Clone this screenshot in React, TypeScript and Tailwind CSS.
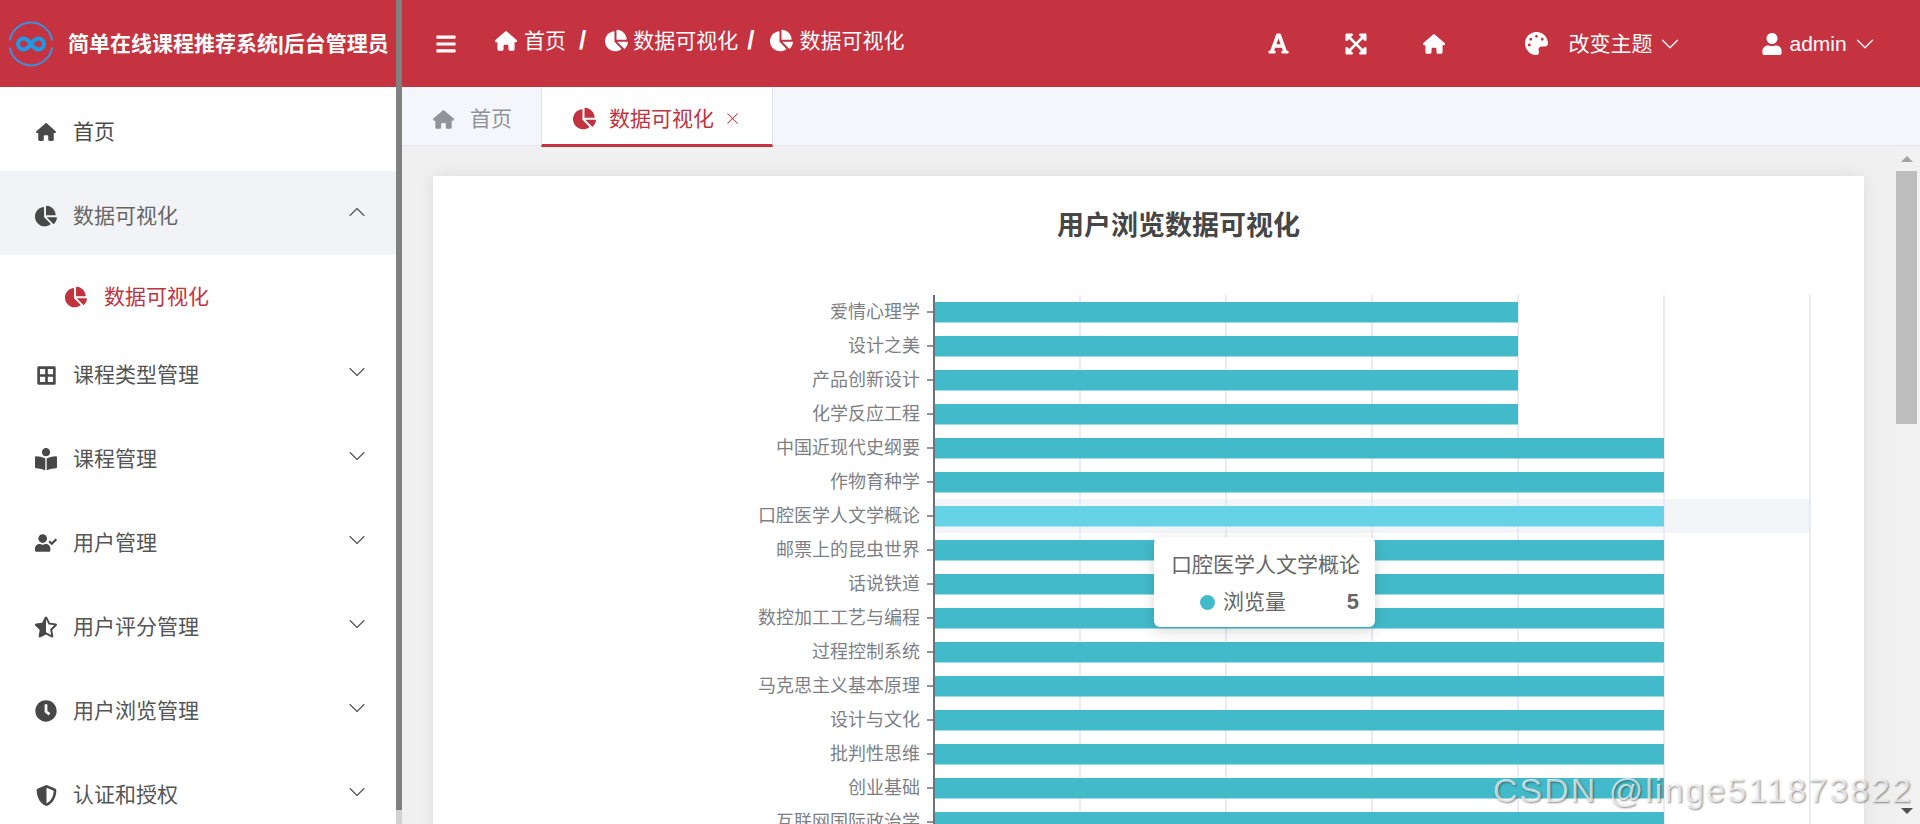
import { ChevronDown, ChevronUp, X } from "lucide-react"
import {
  FaBars,
  FaBookReader,
  FaBorderAll,
  FaChartPie,
  FaClock,
  FaExpandArrowsAlt,
  FaFont,
  FaPalette,
  FaShieldAlt,
  FaStarHalfAlt,
  FaUser,
  FaUserCheck,
} from "react-icons/fa"
import { FaHouse } from "react-icons/fa6"

const menus = [
  { name: "课程类型管理", icon: <FaBorderAll size={21} /> },
  { name: "课程管理", icon: <FaBookReader size={22} /> },
  { name: "用户管理", icon: <FaUserCheck size={22} /> },
  { name: "用户评分管理", icon: <FaStarHalfAlt size={22} /> },
  { name: "用户浏览管理", icon: <FaClock size={22} /> },
  { name: "认证和授权", icon: <FaShieldAlt size={21} /> },
]

const rows = [
  { name: "爱情心理学", value: 4 },
  { name: "设计之美", value: 4 },
  { name: "产品创新设计", value: 4 },
  { name: "化学反应工程", value: 4 },
  { name: "中国近现代史纲要", value: 5 },
  { name: "作物育种学", value: 5 },
  { name: "口腔医学人文学概论", value: 5 },
  { name: "邮票上的昆虫世界", value: 5 },
  { name: "话说铁道", value: 5 },
  { name: "数控加工工艺与编程", value: 5 },
  { name: "过程控制系统", value: 5 },
  { name: "马克思主义基本原理", value: 5 },
  { name: "设计与文化", value: 5 },
  { name: "批判性思维", value: 5 },
  { name: "创业基础", value: 5 },
  { name: "互联网国际政治学", value: 5 },
]

function Logo() {
  return (
    <svg width="46" height="46" viewBox="0 0 46 46" fill="none" className="shrink-0">
      <path d="M1.8 19.5A21.5 21.5 0 0 1 44.2 19.5" stroke="#3f8fdc" strokeWidth="2" />
      <path d="M44.2 26.5A21.5 21.5 0 0 1 1.8 26.5" stroke="#3f8fdc" strokeWidth="2" />
      <path
        d="M23 23C20.5 19.5 18 17.5 15.5 17.5A5.5 5.5 0 0 0 15.5 28.5C18 28.5 20.5 26.5 23 23C25.5 19.5 28 17.5 30.5 17.5A5.5 5.5 0 0 1 30.5 28.5C28 28.5 25.5 26.5 23 23Z"
        stroke="#1e9be6"
        strokeWidth="4"
      />
    </svg>
  )
}

function Sidebar() {
  return (
    <aside className="flex w-[402px] shrink-0">
      <div className="w-[396px]">
        <div className="flex h-[87px] items-center bg-[#c63340] pl-[8px]">
          <Logo />
          <span className="ml-[14px] text-[21px] font-bold whitespace-nowrap text-white">简单在线课程推荐系统|后台管理员</span>
        </div>
        <div className="flex h-[84px] items-center pt-[6px] pl-[34px] text-[21px] text-[#4a4a4a]">
          <span className="flex w-[24px] justify-center"><FaHouse size={20} /></span>
          <span className="ml-[15px]">首页</span>
        </div>
        <div className="flex h-[84px] items-center bg-[#f1f3f6] pt-[6px] pr-[25px] pl-[34px] text-[21px] text-[#666666]">
          <span className="flex w-[24px] justify-center text-[#484848]"><FaChartPie size={22} /></span>
          <span className="ml-[15px]">数据可视化</span>
          <ChevronUp size={28} strokeWidth={1} className="mb-[8px] ml-auto text-[#555555]" />
        </div>
        <div className="flex h-[78px] items-center pt-[6px] pl-[64px] text-[21px] text-[#c0333f]">
          <span className="flex w-[24px] justify-center"><FaChartPie size={22} /></span>
          <span className="ml-[16px]">数据可视化</span>
        </div>
        {menus.map((m) => (
          <div key={m.name} className="flex h-[84px] items-center pr-[25px] pl-[34px] text-[21px] text-[#555555]">
            <span className="flex w-[24px] justify-center text-[#484848]">{m.icon}</span>
            <span className="ml-[15px]">{m.name}</span>
            <ChevronDown size={28} strokeWidth={1} className="mb-[6px] ml-auto text-[#555555]" />
          </div>
        ))}
      </div>
      <div className="h-full w-[6px] bg-[#d2d2d2]">
        <div className="h-[810px] w-full bg-[#808080]" />
      </div>
    </aside>
  )
}

function Header() {
  return (
    <header className="flex h-[87px] items-center bg-[#c63340] text-white">
      <FaBars size={22} className="ml-[33px]" />
      <div className="mb-[6px] flex items-center">
        <FaHouse size={22} className="ml-[38px]" />
        <span className="ml-[7px] text-[21px]">首页</span>
        <span className="ml-[13px] text-[26px] font-bold">/</span>
        <FaChartPie size={23} className="ml-[19px]" />
        <span className="ml-[5px] text-[21px]">数据可视化</span>
        <span className="ml-[9px] text-[26px] font-bold">/</span>
        <FaChartPie size={23} className="ml-[16px]" />
        <span className="ml-[6px] text-[21px]">数据可视化</span>
      </div>
      <FaFont size={23} className="ml-[363px]" />
      <FaExpandArrowsAlt size={24} className="ml-[54px]" />
      <FaHouse size={22} className="ml-[55px]" />
      <FaPalette size={23} className="ml-[80px]" />
      <span className="ml-[20px] text-[21px]">改变主题</span>
      <ChevronDown size={30} strokeWidth={1} className="ml-[3px]" />
      <FaUser size={22} className="ml-[76px]" />
      <span className="ml-[6px] text-[21px]">admin</span>
      <ChevronDown size={30} strokeWidth={1} className="ml-[3px]" />
    </header>
  )
}

function Tabs() {
  return (
    <div className="flex h-[59px] items-stretch border-b border-[#e4e6ea] bg-[#f4f6fb]">
      <div className="flex w-[139px] items-center pt-[6px] pl-[31px] text-[21px] text-[#909399]">
        <FaHouse size={21} />
        <span className="ml-[16px]">首页</span>
      </div>
      <div className="relative z-10 flex h-[60px] w-[232px] items-center border-x border-b-[3px] border-x-[#dfe2e8] border-b-[#c63340] bg-white pt-[6px] pl-[31px] text-[21px] text-[#c0333f]">
        <FaChartPie size={23} />
        <span className="ml-[13px]">数据可视化</span>
        <X size={19} strokeWidth={1.3} className="ml-[9px]" />
      </div>
    </div>
  )
}

function Chart() {
  const x0 = 934
  const unit = 146
  return (
    <svg width="1431" height="560" viewBox="433 274 1431 560" className="block">
      <rect x={x0} y={295 + 6 * 34} width={876} height={34} fill="#f4f5f9" />
      {[1, 2, 3, 4, 5, 6].map((i) => (
        <line key={i} x1={x0 + i * unit} y1="295" x2={x0 + i * unit} y2="834" stroke="#e2e6f0" strokeWidth="1.5" />
      ))}
      {rows.map((r, i) => {
        const cy = 295 + i * 34 + 17
        return (
          <g key={r.name}>
            <rect x={x0} y={cy - 10} width={r.value * unit} height={20.5} fill={i === 6 ? "#66d2e5" : "#43bac9"} />
            <line x1="927" y1={cy} x2={x0} y2={cy} stroke="#6e7079" strokeWidth="1.5" />
            <text x="920" y={cy + 6} textAnchor="end" fontSize="18" fill="#7d7f86">
              {r.name}
            </text>
          </g>
        )
      })}
      <line x1={x0} y1="295" x2={x0} y2="834" stroke="#6e7079" strokeWidth="2" />
    </svg>
  )
}

function Tooltip() {
  return (
    <div className="absolute top-[361px] left-[721px] h-[90px] w-[221px] rounded-[6px] bg-white pt-[13px] pr-[16px] pl-[17px] shadow-[0_4px_14px_rgba(0,0,0,0.16)]">
      <div className="text-[21px] leading-[30px] whitespace-nowrap text-[#666666]">口腔医学人文学概论</div>
      <div className="mt-[7px] flex items-center text-[21px] leading-[30px] text-[#666666]">
        <span className="ml-[29px] h-[15px] w-[15px] rounded-full bg-[#43bac9]" />
        <span className="ml-[8px]">浏览量</span>
        <span className="ml-auto text-[22px] font-bold">5</span>
      </div>
    </div>
  )
}

function Scrollbar() {
  return (
    <div className="flex w-[24px] shrink-0 flex-col bg-[#f1f1f1]">
      <div className="flex h-[25px] w-[21px] items-end justify-center pb-[9px]">
        <svg width="12" height="6" viewBox="0 0 12 6"><path d="M6 0L12 6H0Z" fill="#a3a3a3" /></svg>
      </div>
      <div className="h-[253px] w-[21px] bg-[#bdbdbd]" />
      <div className="mt-auto mb-[10px] flex w-[21px] justify-center">
        <svg width="12" height="6" viewBox="0 0 12 6"><path d="M0 0H12L6 6Z" fill="#505050" /></svg>
      </div>
    </div>
  )
}

export default function App() {
  return (
    <div
      className="relative flex h-[824px] w-[1920px] overflow-hidden bg-white"
      style={{ fontFamily: '"Liberation Sans", "Noto Sans CJK SC", sans-serif' }}
    >
      <Sidebar />
      <div className="flex min-w-0 flex-1 flex-col">
        <Header />
        <Tabs />
        <div className="flex min-h-0 flex-1">
          <main className="min-w-0 flex-1 overflow-hidden bg-[#f0f0f0] pt-[30px] pr-[32px] pl-[31px]">
            <div className="relative h-[700px] bg-white shadow-[0_0_16px_rgba(0,0,0,0.09)]">
              <h2 className="flex h-[98px] items-center justify-center pt-[2px] pl-[60px] text-[27px] font-bold text-[#464646]">
                用户浏览数据可视化
              </h2>
              <Chart />
              <Tooltip />
            </div>
          </main>
          <Scrollbar />
        </div>
      </div>
      <div className="absolute top-[768px] left-[1493px] text-[34px] leading-[44px] tracking-[2px] whitespace-nowrap text-white/70 [text-shadow:1px_1px_2px_rgba(0,0,0,0.45)]">
        CSDN @linge511873822
      </div>
    </div>
  )
}
